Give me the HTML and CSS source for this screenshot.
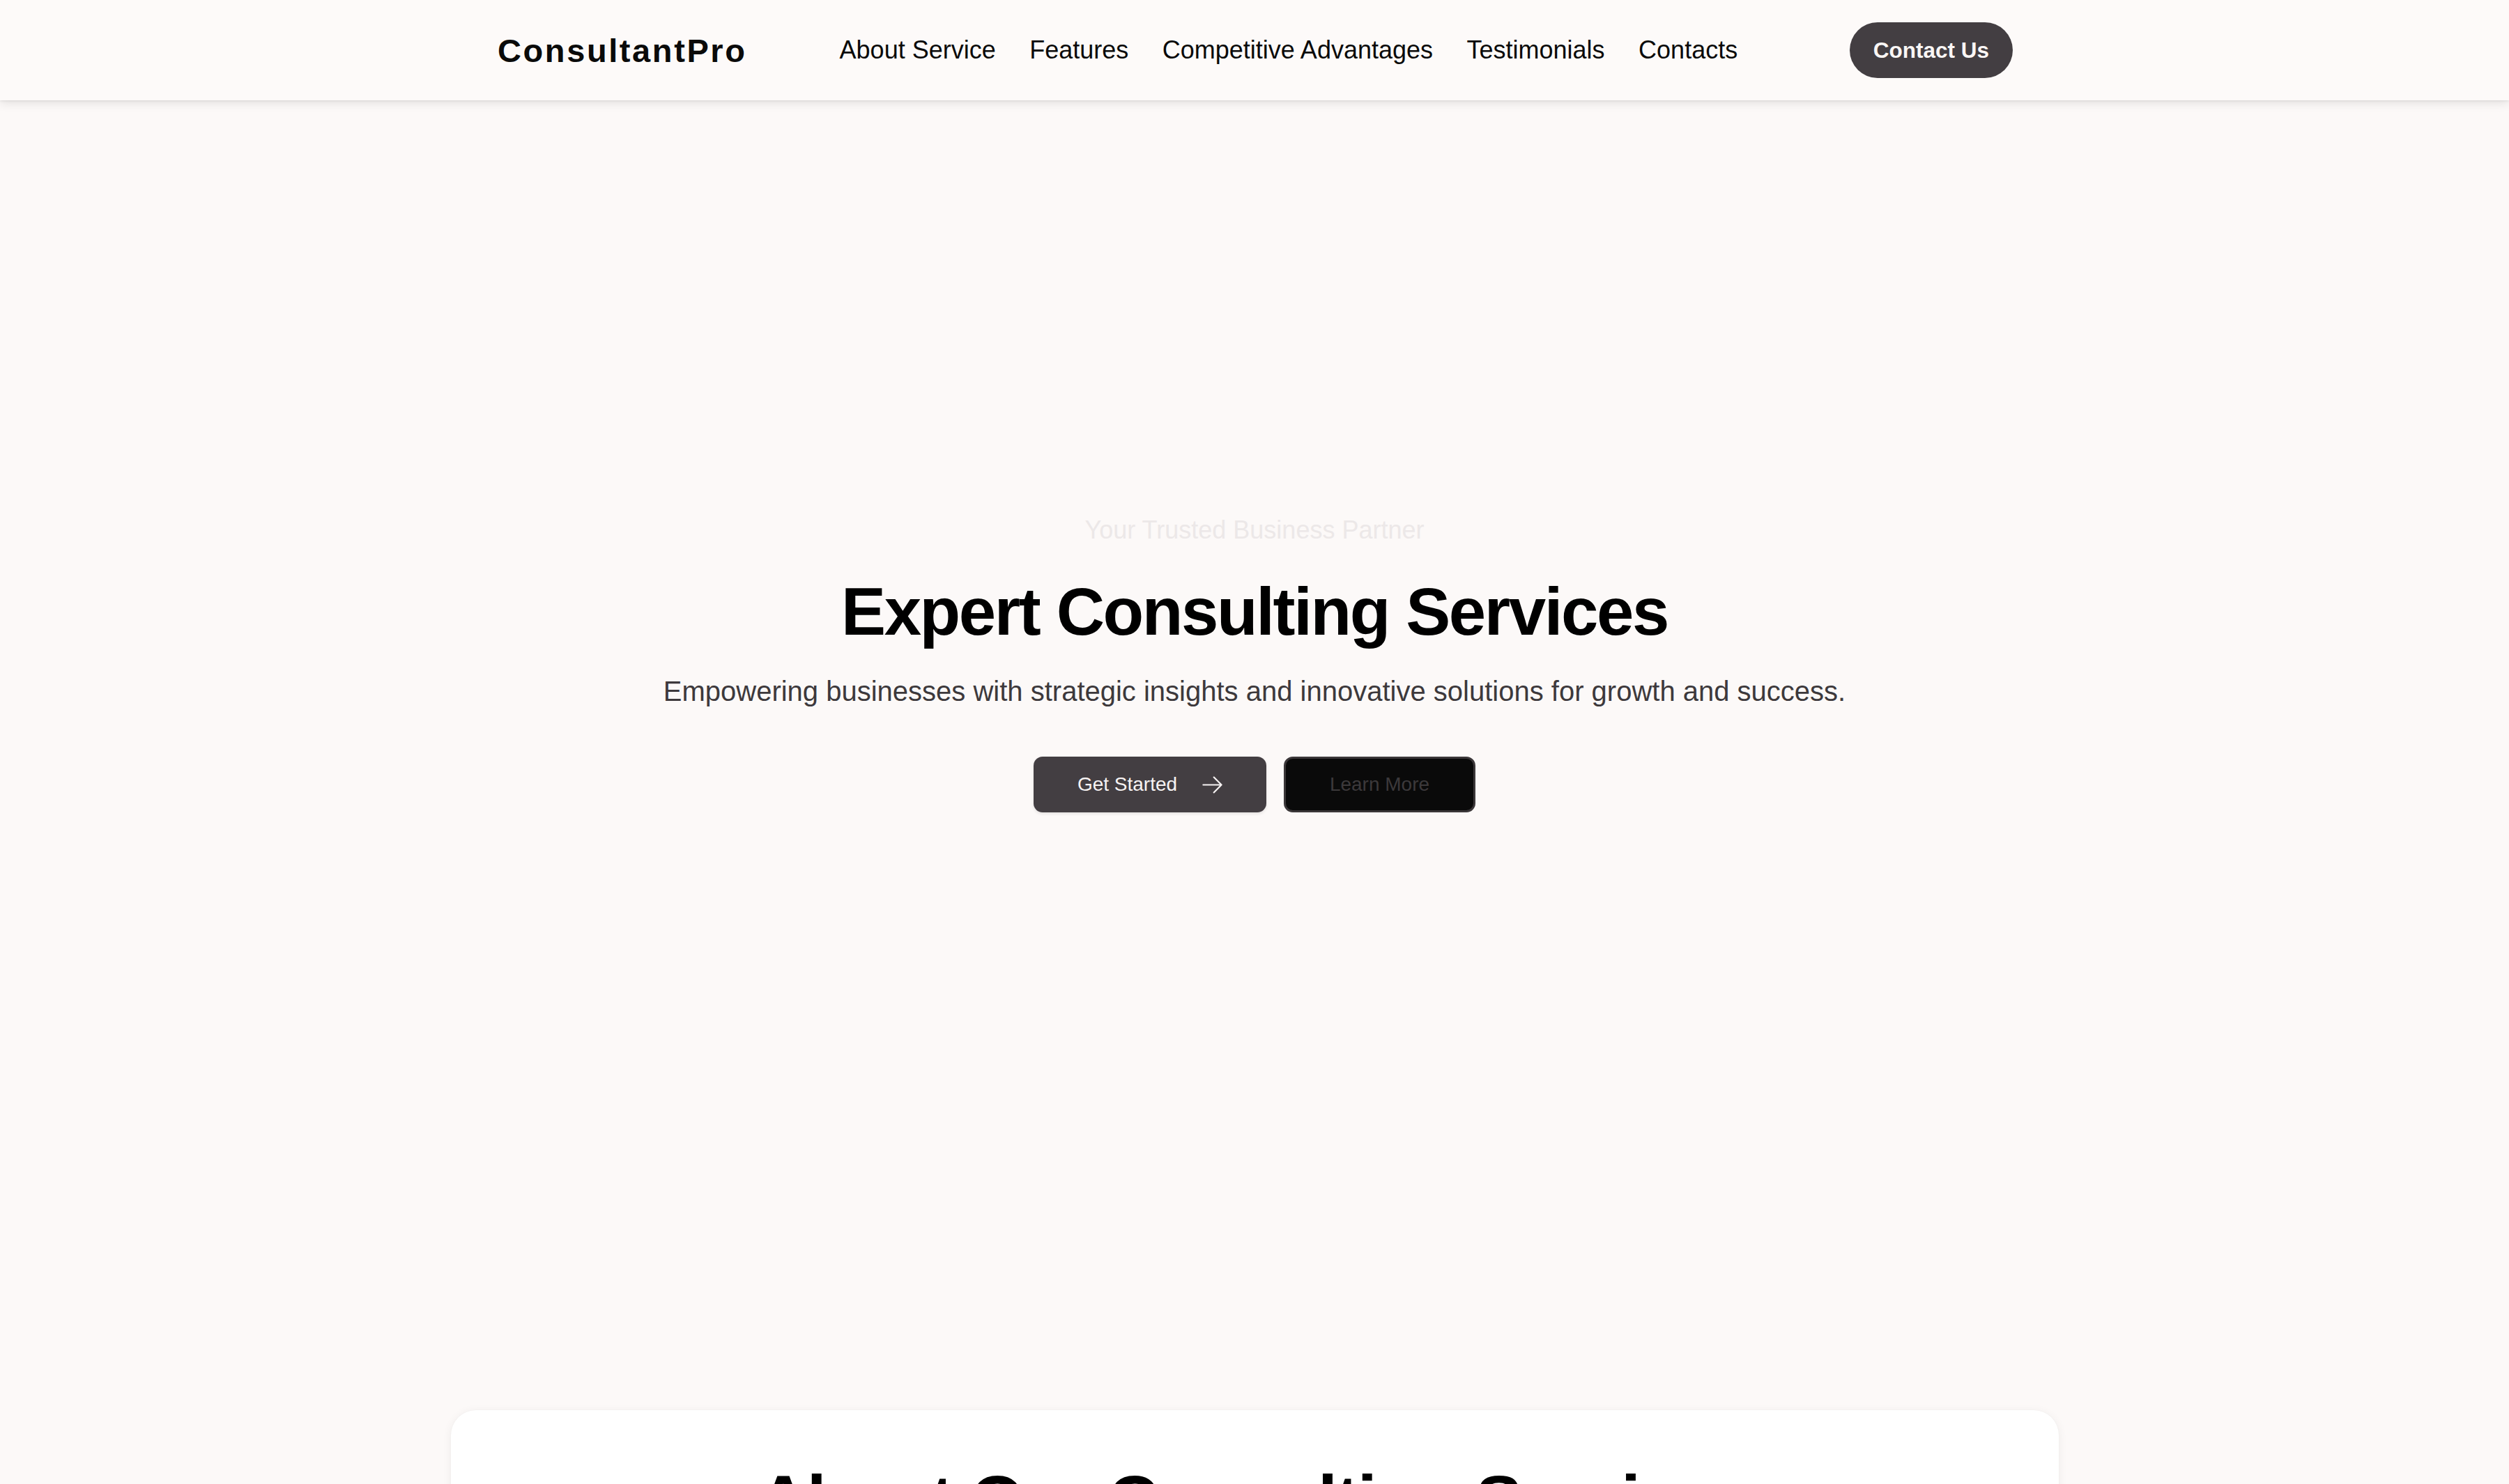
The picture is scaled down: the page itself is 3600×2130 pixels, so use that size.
FILE: index.html
```html
<!DOCTYPE html>
<html lang="en">
<head>
<meta charset="utf-8">
<title>ConsultantPro</title>
<link rel="stylesheet" href="styles.css">
</head>
<body>
<header class="nav">
  <div class="nav-inner">
    <a class="logo" href="#">ConsultantPro</a>
    <nav class="links">
      <a href="#about">About Service</a>
      <a href="#features">Features</a>
      <a href="#advantages">Competitive Advantages</a>
      <a href="#testimonials">Testimonials</a>
      <a href="#contacts">Contacts</a>
    </nav>
    <a class="cta" href="#contacts">Contact Us</a>
  </div>
</header>

<main>
  <section class="hero">
    <p class="eyebrow">Your Trusted Business Partner</p>
    <h1 class="hero-title">Expert Consulting Services</h1>
    <p class="hero-text">Empowering businesses with strategic insights and innovative solutions for growth and success.</p>
    <div class="actions">
      <a class="btn btn-primary" href="#about">
        <span>Get Started</span>
        <svg class="arrow" viewBox="0 0 24 24" fill="none" stroke="currentColor" stroke-width="1.5" stroke-linecap="round" stroke-linejoin="round"><path d="M13.5 4.5 21 12m0 0-7.5 7.5M21 12H3"/></svg>
      </a>
      <a class="btn btn-dark" href="#features">Learn More</a>
    </div>
  </section>

  <section class="about" id="about">
    <div class="card">
      <h2 class="card-title">About Our Consulting Services</h2>
      <p class="card-text">We partner with organizations of every size to turn complex challenges into clear, actionable strategies.</p>
    </div>
  </section>
</main>
</body>
</html>
```

FILE: styles.css
```css
* { box-sizing: border-box; }

html, body {
  margin: 0;
  padding: 0;
}

body {
  background: #fcf9f8;
  color: #0a0a0a;
  font-family: "Liberation Sans", Arial, Helvetica, sans-serif;
}

a { text-decoration: none; color: inherit; }

.nav {
  position: relative;
  z-index: 2;
  height: 144px;
  background: #fdfaf9;
  box-shadow: 0 4px 14px rgba(0, 0, 0, 0.10), 0 1px 3px rgba(0, 0, 0, 0.08);
}

.nav-inner {
  width: 2304px;
  height: 100%;
  margin: 0 auto;
  padding: 0 64px 0 66px;
  display: flex;
  align-items: center;
}

.logo {
  font-size: 47px;
  font-weight: 700;
  letter-spacing: 2.6px;
  color: #0a0a0a;
}

.links {
  display: flex;
  gap: 48.5px;
  margin-left: 133px;
}

.links a {
  font-size: 36px;
  color: #0a0a0a;
}

.cta {
  margin-left: auto;
  height: 80px;
  padding: 0 34px;
  display: flex;
  align-items: center;
  border-radius: 999px;
  background: #433e42;
  color: #faf6f5;
  font-size: 31.5px;
  font-weight: 700;
}

.hero {
  display: flex;
  flex-direction: column;
  align-items: center;
  text-align: center;
  padding: 590px 0 858px;
}

.eyebrow {
  margin: 0;
  font-size: 36px;
  line-height: 54px;
  color: #ece8e8;
}

.hero-title {
  margin: 38px 0 0;
  font-size: 96px;
  line-height: 104px;
  font-weight: 700;
  letter-spacing: -0.025em;
  color: #000;
}

.hero-text {
  margin: 32px 0 0;
  font-size: 40px;
  line-height: 60px;
  color: #3d393c;
}

.actions {
  margin-top: 64px;
  display: flex;
  gap: 25px;
}

.btn {
  height: 80px;
  display: flex;
  align-items: center;
  justify-content: center;
  border-radius: 13px;
  font-size: 28px;
}

.btn-primary {
  width: 334px;
  gap: 33px;
  padding-left: 3px;
  background: #433e42;
  color: #f7f3f3;
  box-shadow: 0 2px 4px rgba(0, 0, 0, 0.10);
}

.arrow {
  width: 35px;
  height: 35px;
  flex: none;
}

.btn-dark {
  width: 275px;
  background: #0a0a0a;
  border: 3px solid #3b3739;
  color: #3c393b;
}

.about {
  display: flex;
  justify-content: center;
}

.card {
  width: 2307px;
  background: #ffffff;
  border-radius: 36px;
  box-shadow: 0 2px 14px rgba(0, 0, 0, 0.06), 0 0 2px rgba(0, 0, 0, 0.04);
  padding: 74px 120px 120px;
  text-align: center;
}

.card-title {
  margin: 0;
  font-size: 101px;
  line-height: 110px;
  font-weight: 700;
  letter-spacing: -0.025em;
  color: #000;
}

.card-text {
  margin: 48px 0 0;
  font-size: 40px;
  line-height: 60px;
  color: #3d393c;
}
```
